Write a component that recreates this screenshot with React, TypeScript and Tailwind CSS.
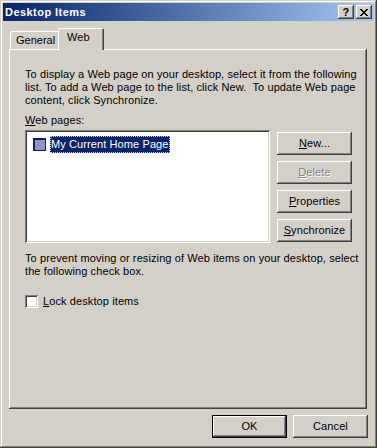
import React from 'react';

const raised =
  'shadow-[inset_-1px_-1px_#404040,inset_1px_1px_#ffffff,inset_-2px_-2px_#808080,inset_2px_2px_#D4D0C8]';
const sunken =
  'shadow-[inset_1px_1px_#808080,inset_-1px_-1px_#ffffff,inset_2px_2px_#404040,inset_-2px_-2px_#D4D0C8]';

function Btn({ children, disabled, isDefault }: { children: React.ReactNode; disabled?: boolean; isDefault?: boolean }) {
  return (
    <div
      className={
        'w-[75px] h-[23px] flex items-center justify-center bg-[#D4D0C8] ' +
        (isDefault
          ? 'shadow-[inset_0_0_0_1px_#000000,inset_-2px_-2px_#404040,inset_2px_2px_#ffffff,inset_-3px_-3px_#808080]'
          : raised) +
        (disabled ? ' text-[#808080] [text-shadow:1px_1px_#ffffff]' : ' text-black')
      }
    >
      {children}
    </div>
  );
}

function CaptionBtn({ children }: { children: React.ReactNode }) {
  return (
    <div className={'w-[16px] h-[14px] bg-[#D4D0C8] flex items-center justify-center ' + raised}>{children}</div>
  );
}

export default function App() {
  return (
    <div className="w-[377px] h-[448px] bg-[#D4D0C8] p-[3px] flex flex-col font-['Liberation_Sans',Arial,sans-serif] text-[11px] leading-[13px] tracking-[0.1px] text-black shadow-[inset_-1px_-1px_#404040,inset_1px_1px_#D4D0C8,inset_-2px_-2px_#808080,inset_2px_2px_#ffffff]">
      {/* title bar */}
      <div className="h-[18px] flex items-center bg-linear-to-r from-[#0A246A] to-[#A6CAF0] pl-[2px] pr-[2px]">
        <span className="text-white font-bold text-[11px] tracking-[0.45px]">Desktop Items</span>
        <div className="ml-auto flex">
          <CaptionBtn>
            <span className="font-bold text-[11px] leading-none mt-[1px]">?</span>
          </CaptionBtn>
          <div className="w-[2px]" />
          <CaptionBtn>
            <svg width="8" height="7" viewBox="0 0 8 7" shapeRendering="crispEdges">
              <path
                d="M0 0h2v1h-2zM6 0h2v1h-2zM1 1h2v1h-2zM5 1h2v1h-2zM2 2h4v1h-4zM3 3h2v1h-2zM2 4h4v1h-4zM1 5h2v1h-2zM5 5h2v1h-2zM0 6h2v1h-2zM6 6h2v1h-2z"
                fill="#000"
              />
            </svg>
          </CaptionBtn>
        </div>
      </div>

      {/* tabs */}
      <div className="px-[6px] mt-[7px] flex flex-col">
        <div className="flex items-end h-[21px] pl-[1px]">
          <div className="h-[18px] w-[50px] pl-[6px] pt-[3px] tracking-normal rounded-tl-[2px] rounded-tr-[2px] shadow-[inset_1px_1px_#ffffff,inset_-1px_0_#404040,inset_-2px_0_#808080]">
            General
          </div>
          <div className="relative z-10 h-[22px] w-[46px] -ml-[2px] -mb-[1px] pl-[9px] pt-[3px] bg-[#D4D0C8] rounded-tl-[2px] rounded-tr-[2px] shadow-[inset_1px_1px_#ffffff,inset_-1px_0_#404040,inset_-2px_0_#808080]">
            Web
          </div>
        </div>

        {/* panel */}
        <div className="h-[360px] w-[358px] pl-[16px] pt-[19px] shadow-[inset_-1px_-1px_#404040,inset_1px_1px_#ffffff,inset_-2px_-2px_#808080]">
          <p>
            To display a Web page on your desktop, select it from the following
            <br />
            list. To add a Web page to the list, click New.&nbsp; To update Web page
            <br />
            content, click Synchronize.
          </p>
          <div className="mt-[7px]">
            <span className="underline">W</span>eb pages:
          </div>
          <div className="mt-[3px] flex">
            <div className={'w-[245px] h-[113px] bg-white p-[2px] ' + sunken}>
              <div className="flex items-center mt-[4px] ml-[6px]">
                <div className="w-[13px] h-[13px] bg-[#8C96C0] border border-[#0A246A] shadow-[inset_1px_1px_#0A246A]" />
                <div className="ml-[4px] px-[1px] h-[17px] flex items-center bg-[#0A246A] text-white outline outline-1 outline-dotted outline-[#D4D0C8] -outline-offset-1">
                  My Current Home Page
                </div>
              </div>
            </div>
            <div className="ml-[7px] mt-[2px] flex flex-col gap-[6px]">
              <Btn>
                <span>
                  <span className="underline">N</span>ew...
                </span>
              </Btn>
              <Btn disabled>
                <span>
                  <span className="underline">D</span>elete
                </span>
              </Btn>
              <Btn>
                <span>
                  <span className="underline">P</span>roperties
                </span>
              </Btn>
              <Btn>
                <span>
                  <span className="underline">S</span>ynchronize
                </span>
              </Btn>
            </div>
          </div>
          <p className="mt-[9px]">
            To prevent moving or resizing of Web items on your desktop, select
            <br />
            the following check box.
          </p>
          <div className="mt-[17px] flex items-center">
            <div className={'w-[13px] h-[13px] bg-white ' + sunken} />
            <span className="ml-[5px]">
              <span className="underline">L</span>ock desktop items
            </span>
          </div>
        </div>
      </div>

      {/* bottom buttons */}
      <div className="mt-[6px] flex justify-end gap-[6px] pr-[6px]">
        <Btn isDefault>OK</Btn>
        <Btn>Cancel</Btn>
      </div>
    </div>
  );
}
